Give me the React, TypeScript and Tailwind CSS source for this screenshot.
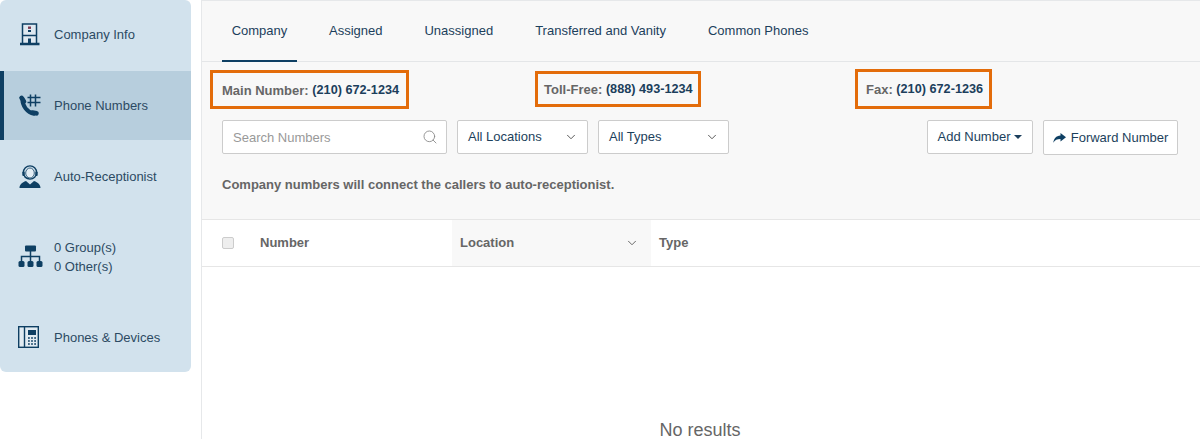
import { ChevronDown, Search } from 'lucide-react';
import type { ReactNode } from 'react';

const BuildingIcon = () => (
    <svg width="20" height="23" viewBox="0 0 20 23" fill="none" className="ml-[2px] text-[#0e3f63]">
        <path d="M2.500 1h14v20h-14z" fill="#dfe9f1" stroke="currentColor" strokeWidth="1.500" />
        <path d="M2.500 12.500h14" stroke="currentColor" strokeWidth="1.400" />
        <path d="M0 21h19.500" stroke="currentColor" strokeWidth="2.400" />
        <rect x="8" y="3.500" width="3" height="2.400" fill="#7c3a52" />
        <rect x="8" y="7" width="3" height="2" fill="#0e3f63" />
        <rect x="8" y="15.500" width="3" height="5" fill="#0e3f63" />
    </svg>
);

const PhoneHashIcon = () => (
    <svg width="23" height="23" viewBox="0 0 23 23" fill="none" className="mt-[-1px]">
        <path d="M4.500 5C4 12 9.500 18.500 16 19.800" stroke="#0e3f63" strokeWidth="4" strokeLinecap="round" />
        <path d="M3.500 3.800 6 7.500M14.500 18.500l4 .8" stroke="#0e3f63" strokeWidth="4.600" strokeLinecap="round" />
        <path d="M12.500 0.500v12M17.500 0.500v12M9.500 3.500h13M9.500 8.500h13" stroke="#0e3f63" strokeWidth="1.500" />
    </svg>
);

const AgentIcon = () => (
    <svg width="23" height="23" viewBox="0 0 23 23" fill="none" className="ml-[1px]">
        <circle cx="11" cy="7.500" r="6.600" stroke="#0e3f63" strokeWidth="1.400" />
        <ellipse cx="11" cy="8" rx="4.300" ry="5" fill="#e3edf4" stroke="#0e3f63" strokeWidth="0.800" />
        <rect x="3.300" y="6.500" width="2.400" height="4.500" rx="1" fill="#0e3f63" />
        <rect x="16.300" y="6.500" width="2.400" height="4.500" rx="1" fill="#0e3f63" />
        <path d="M5.500 11.500c1 1.500 2.500 2 4.500 1.800" stroke="#0e3f63" strokeWidth="1.200" />
        <path d="M0.500 23c0-3.500 2.500-5.500 6.500-7l4 3.400 4-3.400c4 1.500 6.500 3.500 6.500 7Z" fill="#0e3f63" />
    </svg>
);

const TreeIcon = () => (
    <svg width="25" height="23" viewBox="0 0 25 23" fill="none">
        <rect x="7" y="0.500" width="11" height="6" rx="1" fill="#0e3f63" />
        <path d="M12.500 6v11M3.500 17v-5.500h18V17" stroke="#0e3f63" strokeWidth="1.500" />
        <rect x="0.500" y="16" width="6" height="6" rx="1.500" fill="#0e3f63" />
        <rect x="9.500" y="16" width="6" height="6" rx="1.500" fill="#0e3f63" />
        <rect x="18.500" y="16" width="6" height="6" rx="1.500" fill="#0e3f63" />
    </svg>
);

const DeskPhoneIcon = () => (
    <svg width="21" height="22" viewBox="0 0 21 22" fill="none" className="mt-[-2px]">
        <rect x="0.700" y="0.700" width="19.600" height="20.600" fill="#e1ebf2" stroke="#0e3f63" strokeWidth="1.400" />
        <path d="M6.500 1v20" stroke="#0e3f63" strokeWidth="1.400" />
        <rect x="10" y="4" width="8" height="5" fill="#0e3f63" />
        <path d="M10 12h8M10 15h8M10 18h8" stroke="#0e3f63" strokeWidth="1.300" strokeDasharray="1.800 1.300" />
    </svg>
);

const ForwardIcon = () => (
    <svg width="13" height="10" viewBox="0 0 13 10" fill="#0e3f63">
        <path d="M7.500 0 13 4.300 7.500 8.500V6C4 6 2 7 0.300 9.800 0.800 5.500 3 2.800 7.500 2.500Z" />
    </svg>
);

const navItems: { icon: ReactNode; label: ReactNode; height: string; active?: boolean }[] = [
    { icon: <BuildingIcon />, label: 'Company Info', height: 'h-[71px] pb-[3px]' },
    { icon: <PhoneHashIcon />, label: 'Phone Numbers', height: 'h-[69px]', active: true },
    { icon: <AgentIcon />, label: 'Auto-Receptionist', height: 'h-[72px]' },
    {
        icon: <TreeIcon />,
        label: (
            <>
                0 Group(s)
                <br />0 Other(s)
            </>
        ),
        height: 'h-[89px]',
    },
    { icon: <DeskPhoneIcon />, label: 'Phones & Devices', height: 'h-[71px] pt-[2px]' },
];

const tabs = [
    { label: 'Company', className: 'w-[75px] ml-[20px] border-b-2 border-[#0e3f63]' },
    { label: 'Assigned', className: 'ml-[32px]' },
    { label: 'Unassigned', className: 'ml-[42px]' },
    { label: 'Transferred and Vanity', className: 'ml-[42px]' },
    { label: 'Common Phones', className: 'ml-[42px]' },
];

const Select = ({ label }: { label: string }) => (
    <div className="flex h-[34px] w-[131px] items-center justify-between rounded-[2px] border border-[#ccc] bg-white pl-[10px] pr-[9px] text-[13px] text-[#1c3f5c]">
        <span className="mt-[-1px]">{label}</span>
        <ChevronDown size={14} strokeWidth={1.5} className="text-[#444]" />
    </div>
);

const App = () => (
    <div className="flex h-[439px] w-[1200px] overflow-hidden bg-white font-['Liberation_Sans',Arial,sans-serif] text-[13px]">
        <aside className="h-[372px] w-[191px] overflow-hidden rounded-[6px] bg-[#d2e2ed]">
            {navItems.map((item, i) => (
                <div
                    key={i}
                    className={`flex items-center text-[13px] leading-[19px] text-[#2c4a63] ${item.height} ${
                        item.active ? 'border-l-[4px] border-[#0e3f63] bg-[#b7cedd] pl-[14px]' : 'pl-[18px]'
                    }`}
                >
                    <span className="flex w-[36px] shrink-0">{item.icon}</span>
                    <span>{item.label}</span>
                </div>
            ))}
        </aside>

        <main className="ml-[10px] flex-1 border-l border-t border-[#e6e8ea]">
            <div className="h-[218px] bg-[#f8f8f8]">
                <nav className="flex h-[61px] border-b border-[#e4e6e8] text-[13px] text-[#1c3f5c]">
                    {tabs.map((tab) => (
                        <div key={tab.label} className={`h-[61px] shrink-0 pt-[20px] text-center ${tab.className}`}>
                            {tab.label}
                        </div>
                    ))}
                </nav>

                <div className="flex h-[47px] items-start text-[13px] font-bold text-[#666]">
                    <div className="ml-[8px] mt-[8px] flex h-[39px] w-[199px] items-center border-[3px] border-[#e36c0a] pl-[9px] pt-[2px]">
                        Main Number:&nbsp;<span className="text-[12.700px] text-[#1c3f5c]">(210) 672-1234</span>
                    </div>
                    <div className="ml-[126px] mt-[9px] flex h-[36px] w-[166px] items-center border-[3px] border-[#e36c0a] pl-[6px] pt-[2px]">
                        Toll-Free:&nbsp;<span className="text-[12.700px] text-[#1c3f5c]">(888) 493-1234</span>
                    </div>
                    <div className="ml-[154px] mt-[7px] flex h-[40px] w-[137px] items-center border-[3px] border-[#e36c0a] pl-[8px] pt-[2px]">
                        Fax:&nbsp;<span className="text-[12.700px] text-[#1c3f5c]">(210) 672-1236</span>
                    </div>
                </div>

                <div className="mt-[11px] flex items-start pl-[20px]">
                    <div className="flex h-[34px] w-[225px] items-center justify-between rounded-[2px] border border-[#ccc] bg-white pl-[10px] pr-[8px] text-[13px] text-[#999]">
                        <span className="mt-[1px]">Search Numbers</span>
                        <Search size={16} strokeWidth={1.3} className="text-[#888]" />
                    </div>
                    <div className="ml-[10px]">
                        <Select label="All Locations" />
                    </div>
                    <div className="ml-[10px]">
                        <Select label="All Types" />
                    </div>
                    <div className="ml-[198px] flex h-[34px] w-[106px] items-center justify-center rounded-[2px] border border-[#ccc] bg-white text-[13px] text-[#1c3f5c]">
                        <span className="mt-[-1px]">Add Number</span>
                        <span className="ml-[4px] border-x-[4px] border-t-[4px] border-x-transparent border-t-[#1c3f5c]" />
                    </div>
                    <div className="ml-[10px] flex h-[35px] w-[135px] items-center justify-center gap-[5px] rounded-[2px] border border-[#ccc] bg-white text-[13px] text-[#1c3f5c]">
                        <ForwardIcon />
                        <span>Forward Number</span>
                    </div>
                </div>

                <p className="ml-[20px] mt-[22px] text-[13px] font-bold leading-[16px] text-[#666]">
                    Company numbers will connect the callers to auto-receptionist.
                </p>
            </div>

            <div className="flex h-[48px] items-stretch border-y border-[#e6e6e6] text-[13px] font-bold text-[#666]">
                <div className="flex w-[250px] items-center pl-[20px]">
                    <span className="h-[12px] w-[12px] rounded-[2px] border border-[#ccc] bg-[#eee]" />
                    <span className="ml-[26px]">Number</span>
                </div>
                <div className="flex w-[199px] items-center justify-between bg-[#f8f8f8] pl-[8px] pr-[12px]">
                    <span>Location</span>
                    <ChevronDown size={14} strokeWidth={1.5} className="text-[#555]" />
                </div>
                <div className="flex items-center pl-[8px]">Type</div>
            </div>

            <p className="mt-[152px] pr-[2px] text-center text-[18px] leading-[22px] text-[#666]">No results</p>
        </main>
    </div>
);

export default App;
